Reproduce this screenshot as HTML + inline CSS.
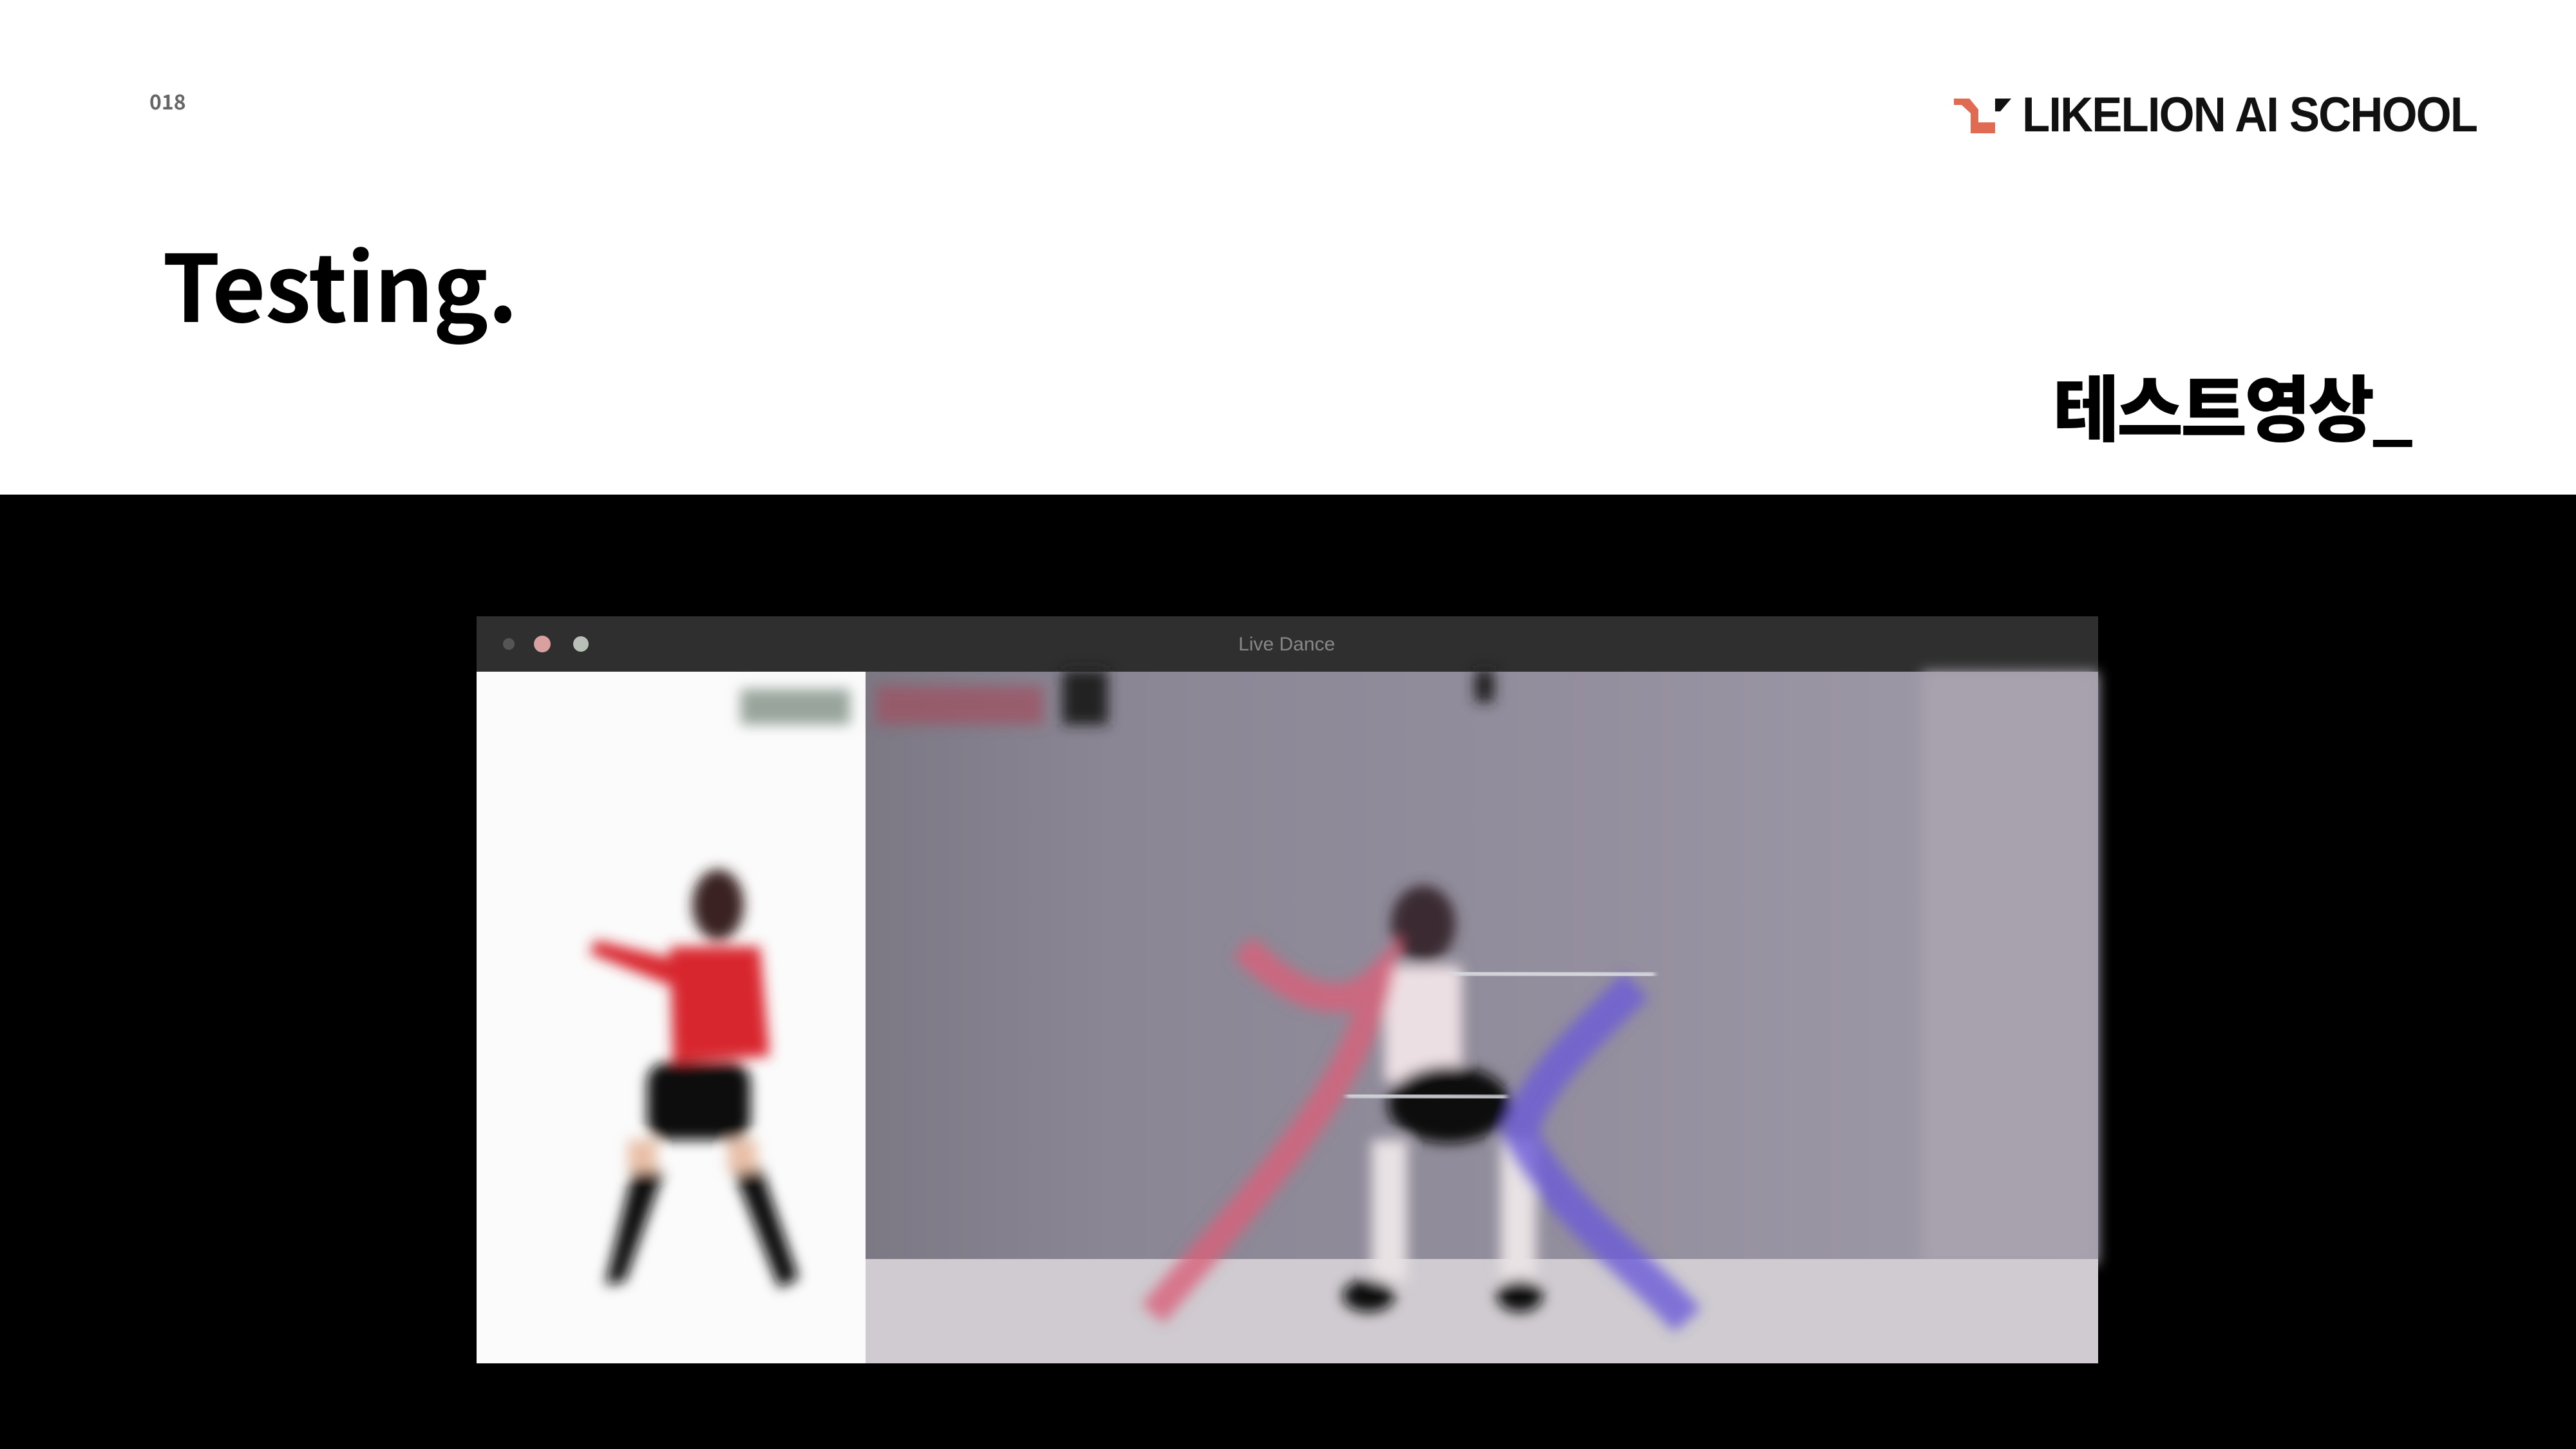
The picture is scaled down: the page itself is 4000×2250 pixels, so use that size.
<!DOCTYPE html>
<html><head><meta charset="utf-8"><style>
html,body{margin:0;padding:0;}
body{width:4000px;height:2250px;position:relative;overflow:hidden;background:#fff;font-family:"Liberation Sans","Noto Sans CJK KR",sans-serif;}
.abs{position:absolute;}
</style></head><body>
<div class="abs" style="left:232px;top:134px;font-size:32px;font-weight:bold;color:#666;font-family:'Noto Sans CJK KR',sans-serif;">018</div>
<svg class="abs" style="left:0;top:0" width="3200" height="240">
<polygon points="3034,153 3058,153 3072,170 3072,190 3098,190 3098,207 3060,207 3060,176 3046,163 3034,163" fill="#e06b52"/>
<polygon points="3098,153 3123,153 3106,173 3098,173" fill="#111"/>
</svg>
<div class="abs" style="left:3140px;top:141px;font-size:76px;font-weight:bold;color:#111;letter-spacing:-2px;line-height:1;white-space:nowrap;transform:scaleX(0.93);transform-origin:left top;">LIKELION AI SCHOOL</div>
<div class="abs" style="left:252px;top:366px;font-size:144px;font-weight:700;color:#000;line-height:1;font-family:'Noto Sans CJK KR',sans-serif;letter-spacing:-1px;">Testing.</div>
<div class="abs" style="left:3188px;top:572px;font-size:112px;font-weight:900;color:#000;font-family:'Noto Sans CJK KR',sans-serif;letter-spacing:-4px;line-height:1;">테스트영상_</div>
<div class="abs" style="left:0;top:768px;width:4000px;height:1482px;background:#000;"></div>
<svg class="abs" style="left:0;top:0" width="4000" height="2250">
<defs>
<filter id="b"><feGaussianBlur stdDeviation="10"/></filter>
<filter id="b2"><feGaussianBlur stdDeviation="4"/></filter>
<linearGradient id="wall" x1="0" x2="1"><stop offset="0" stop-color="#7c7884"/><stop offset="0.2" stop-color="#8a8694"/><stop offset="0.6" stop-color="#948f9e"/><stop offset="1" stop-color="#a09ba8"/></linearGradient>
</defs>
<rect x="740" y="957" width="2518" height="86" fill="#2f2f2f"/>
<circle cx="790" cy="1000" r="9" fill="#555"/><circle cx="842" cy="1000" r="13" fill="#d9a0a0"/><circle cx="902" cy="1000" r="12" fill="#b8c0b8"/>
<text x="1998" y="1010" font-size="30" fill="#888" text-anchor="middle" font-family="Liberation Sans">Live Dance</text>
<rect x="740" y="1043" width="604" height="1074" fill="#fbfbfb"/>
<rect x="1344" y="1043" width="1914" height="1074" fill="url(#wall)"/>
<rect x="2985" y="1043" width="273" height="920" fill="#a7a2ae" filter="url(#b)"/>
<rect x="1344" y="1955" width="1914" height="162" fill="#cfcbd0"/>
<g filter="url(#b)">
<rect x="1150" y="1070" width="170" height="55" fill="#98a49c"/>
<rect x="1360" y="1065" width="260" height="60" fill="#a05060" opacity="0.7"/>
<rect x="1650" y="1040" width="70" height="85" fill="#222"/>
<rect x="2290" y="1040" width="30" height="50" fill="#222"/>
<ellipse cx="1115" cy="1405" rx="40" ry="55" fill="#3a2020"/>
<path d="M1040 1470 L1180 1470 L1195 1640 L1045 1650 Z" fill="#d8282e"/>
<path d="M1050 1490 L925 1460 L915 1480 L1040 1530 Z" fill="#d8282e"/>
<rect x="1005" y="1650" width="160" height="120" rx="30" fill="#111"/>
<path d="M985 1810 L1030 1820 L970 1990 L940 1995 Z" fill="#111"/>
<path d="M1140 1820 L1180 1810 L1240 1985 L1210 2000 Z" fill="#111"/>
<rect x="975" y="1770" width="45" height="50" fill="#e8c0a8"/>
<rect x="1130" y="1770" width="45" height="50" fill="#e8c0a8"/>
<ellipse cx="2210" cy="1435" rx="50" ry="60" fill="#3a2a30"/>
<rect x="2150" y="1500" width="120" height="180" fill="#ecdfe3"/>
<ellipse cx="2250" cy="1715" rx="95" ry="60" fill="#111"/>
<rect x="2130" y="1770" width="55" height="220" fill="#e8e2e4"/>
<rect x="2330" y="1770" width="55" height="220" fill="#e8e2e4"/>
<ellipse cx="2125" cy="2012" rx="40" ry="25" fill="#111"/>
<ellipse cx="2360" cy="2012" rx="35" ry="25" fill="#111"/>
<path d="M1930 1470 C2000 1540 2080 1580 2140 1520 C2100 1700 1950 1850 1790 2040" stroke="#d9607a" stroke-width="45" fill="none" opacity="0.8"/>
<path d="M2540 1530 C2470 1600 2380 1680 2360 1760 C2420 1880 2540 1960 2620 2050" stroke="#6a5ad8" stroke-width="55" fill="none" opacity="0.8"/>
</g>
<line x1="2250" y1="1510" x2="2570" y2="1515" stroke="#d8dae0" stroke-width="14" filter="url(#b2)"/>
<line x1="2090" y1="1700" x2="2340" y2="1705" stroke="#d8dae0" stroke-width="12" filter="url(#b2)"/>
</svg>
</body></html>
